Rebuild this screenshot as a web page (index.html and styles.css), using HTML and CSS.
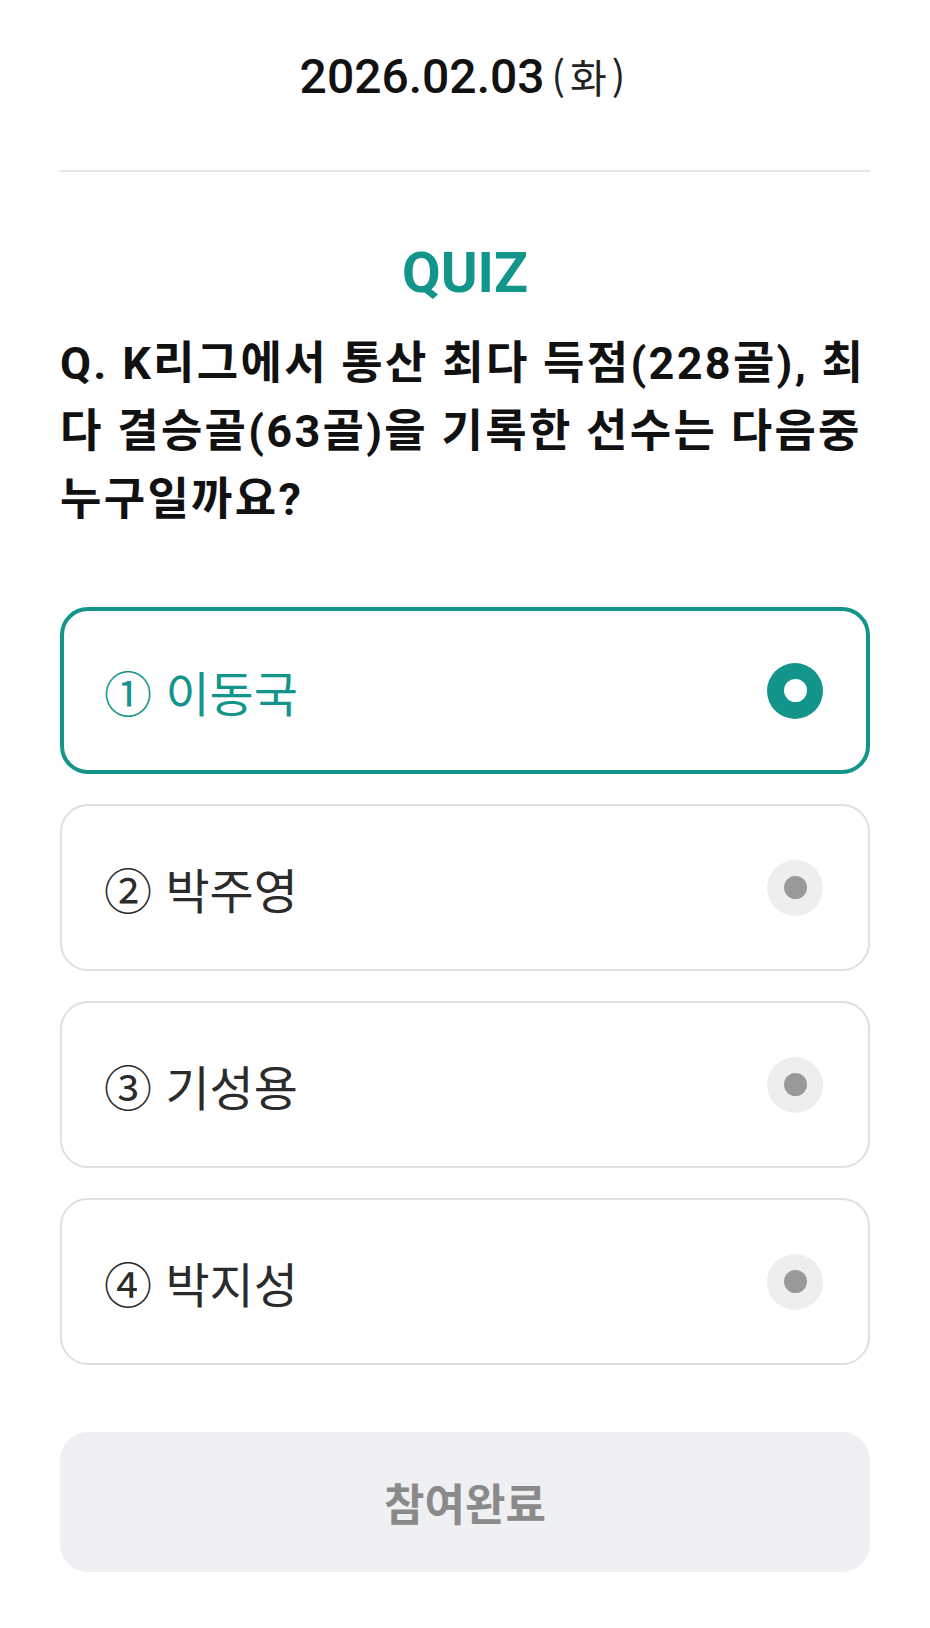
FILE: index.html
```
<!DOCTYPE html>
<html lang="ko">
<head>
<meta charset="utf-8">
<title>QUIZ</title>
<link rel="stylesheet" href="styles.css">
</head>
<body>
<div class="page">
  <header class="date-bar">
    <span class="date">2026.02.03</span><span class="weekday">(화)</span>
  </header>
  <section class="quiz">
    <h1 class="quiz-title">QUIZ</h1>
    <p class="question">Q. K리그에서 통산 최다 득점(228골), 최다 결승골(63골)을 기록한 선수는 다음중 누구일까요?</p>
    <ul class="options">
      <li class="option selected"><span class="label">① 이동국</span><span class="radio"></span></li>
      <li class="option"><span class="label">② 박주영</span><span class="radio"></span></li>
      <li class="option"><span class="label">③ 기성용</span><span class="radio"></span></li>
      <li class="option"><span class="label">④ 박지성</span><span class="radio"></span></li>
    </ul>
    <button class="submit" type="button">참여완료</button>
  </section>
</div>
</body>
</html>
```
FILE: styles.css
```
* { box-sizing: border-box; }
html, body { margin: 0; padding: 0; background: #fff; }
body {
  font-family: Roboto, "Noto Sans CJK KR", sans-serif;
  color: #111;
}
.page {
  padding: 0 60px;
}
.date-bar {
  display: flex;
  justify-content: center;
  align-items: baseline;
  padding-top: 47px;
  height: 172px;
  border-bottom: 2px solid #e6e6e6;
  line-height: 58px;
}
.date {
  font-size: 48px;
  font-weight: 500;
  color: #111;
}
.weekday {
  font-family: "Noto Sans CJK KR", sans-serif;
  font-size: 40px;
  font-weight: 400;
  letter-spacing: 5px;
  margin-left: 7px;
  color: #222;
}
.quiz-title {
  margin: 73px 0 0;
  text-align: center;
  font-family: Roboto, sans-serif;
  font-size: 56px;
  line-height: 56px;
  font-weight: 700;
  color: #13958b;
}
.question {
  margin: 29px 0 0;
  font-family: Roboto, "Noto Sans CJK KR", sans-serif;
  font-size: 45px;
  line-height: 68px;
  font-weight: 700;
  color: #111;
  letter-spacing: 2.3px;
}
.options {
  list-style: none;
  margin: 73px 0 0;
  padding: 0;
  display: flex;
  flex-direction: column;
  gap: 30px;
}
.option {
  height: 167px;
  display: flex;
  align-items: center;
  justify-content: space-between;
  padding: 0 45px 0 42px;
  border: 2px solid #dfdfdf;
  border-radius: 28px;
  background: #fff;
}
.option.selected {
  border: 4px solid #13958b;
  padding: 0 43px 0 40px;
}
.label {
  font-family: "Noto Sans CJK KR", sans-serif;
  font-size: 48px;
  font-weight: 400;
  color: #2b2b2b;
}
.selected .label { color: #13958b; }
.radio {
  width: 56px;
  height: 56px;
  border-radius: 50%;
  background: #eeeeee;
  display: flex;
  align-items: center;
  justify-content: center;
}
.radio::after {
  content: "";
  width: 23px;
  height: 23px;
  border-radius: 50%;
  background: #999999;
}
.selected .radio { background: #13958b; }
.selected .radio::after { background: #ffffff; }
.submit {
  display: block;
  width: 100%;
  height: 140px;
  margin: 67px 0 0;
  border: 0;
  border-radius: 28px;
  background: #eff0f3;
  font-family: "Noto Sans CJK KR", sans-serif;
  font-size: 44px;
  font-weight: 700;
  color: #8a8a8a;
}
```
